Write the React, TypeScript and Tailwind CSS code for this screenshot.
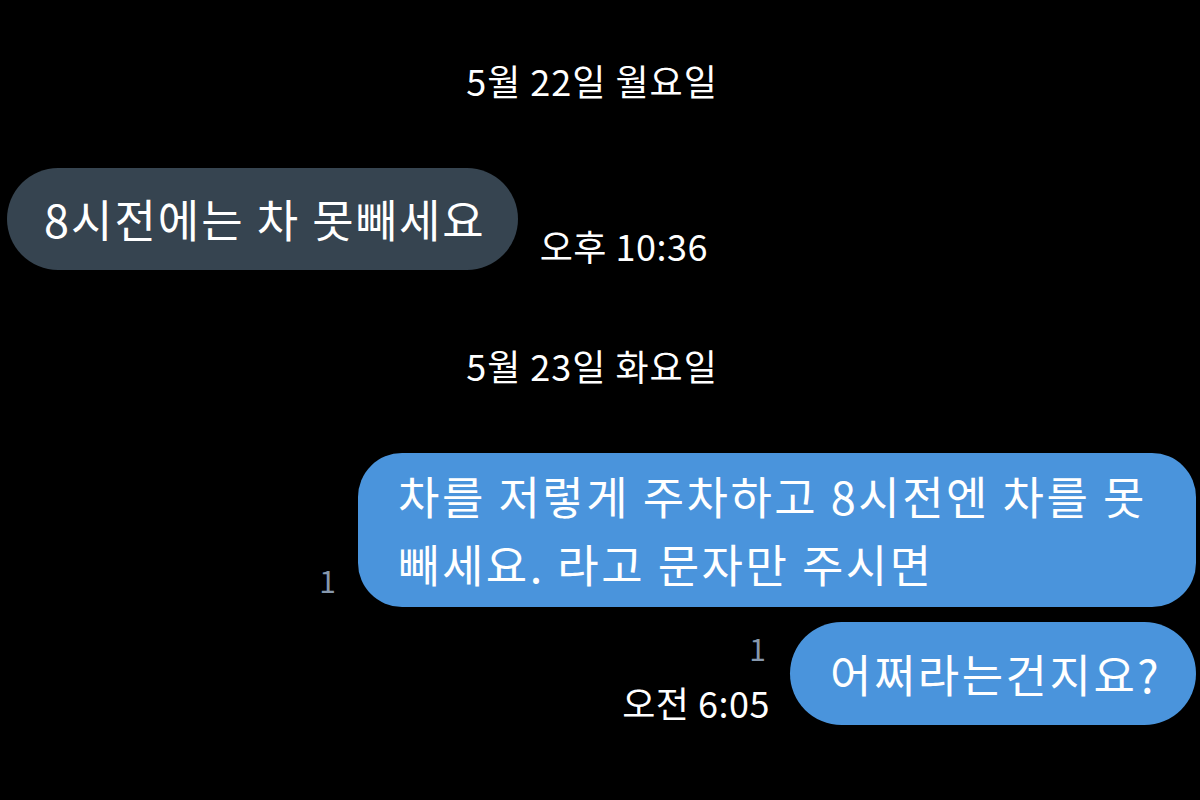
import React from 'react';

const font = { fontFamily: '"Noto Sans CJK KR", "Noto Sans", sans-serif' };

function DateLine({ text, top }: { text: string; top: string }) {
  return (
    <div className={`${top} flex justify-center pr-[16px] text-[36px] leading-[34px] tracking-[1px] text-white`}>{text}</div>
  );
}

export default function App() {
  return (
    <div className="w-[1200px] h-[800px] bg-black overflow-hidden flex flex-col font-normal" style={font}>
      <DateLine text="5월 22일 월요일" top="mt-[63px]" />

      {/* incoming */}
      <div className="mt-[71px] flex items-end pl-[7px]">
        <div className="h-[102px] rounded-[51px] bg-[#364450] pl-[37px] pr-[32px] flex items-center text-[45px] tracking-[2px] text-white whitespace-nowrap">
          8시전에는 차 못빼세요
        </div>
        <div className="ml-[22px] mb-[8px] text-[36px] leading-[34px] tracking-[0.5px] text-white whitespace-nowrap">오후 10:36</div>
      </div>

      <DateLine text="5월 23일 화요일" top="mt-[78px]" />

      {/* outgoing */}
      <div className="mt-[71px] flex justify-end items-end pr-[4px]">
        <div className="mr-[22px] mb-[12px] text-[30px] leading-[30px] text-[#8798ad]">1</div>
        <div className="w-[838px] h-[154px] rounded-[44px] bg-[#4a94dc] pl-[40px] flex items-center text-[45px] leading-[68px] tracking-[2.5px] text-white whitespace-nowrap">
          <div>
            차를 저렇게 주차하고 8시전엔 차를 못
            <br />
            빼세요. 라고 문자만 주시면
          </div>
        </div>
      </div>

      <div className="mt-[15px] flex justify-end items-end pr-[4px]">
        <div className="flex flex-col items-end mr-[20px] mb-[6px]">
          <div className="mr-[4px] text-[30px] leading-[30px] text-[#8798ad]">1</div>
          <div className="mt-[22px] text-[36px] leading-[34px] tracking-[0.5px] text-white whitespace-nowrap">오전 6:05</div>
        </div>
        <div className="w-[406px] h-[103px] rounded-[52px] bg-[#4a94dc] pl-[40px] flex items-center text-[45px] tracking-[2.5px] text-white whitespace-nowrap">
          어쩌라는건지요?
        </div>
      </div>
    </div>
  );
}
